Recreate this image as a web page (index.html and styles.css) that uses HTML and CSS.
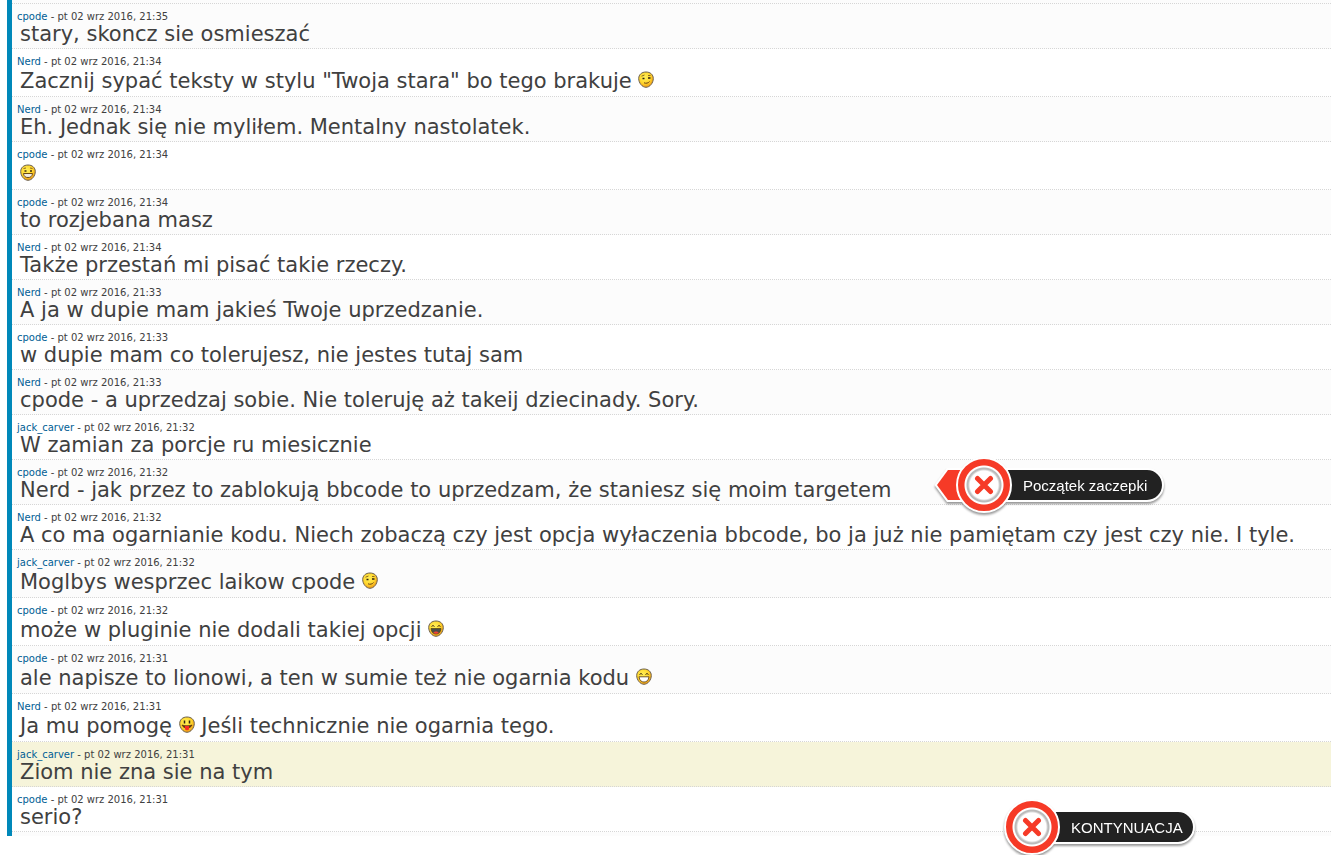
FILE: index.html
```html
<!DOCTYPE html>
<html lang="pl">
<head>
  <meta charset="utf-8">
  <title>Shoutbox</title>
  <link rel="stylesheet" href="styles.css">
</head>
<body>
<svg class="defs" width="0" height="0" aria-hidden="true">
  <defs>
    <radialGradient id="skin" cx="42%" cy="35%" r="65%">
      <stop offset="0" stop-color="#fff05a"/>
      <stop offset="0.6" stop-color="#ffd62c"/>
      <stop offset="1" stop-color="#f09a14"/>
    </radialGradient>
    <symbol id="face" viewBox="0 0 16 17">
      <path d="M8 1C12.300 1 15.300 3.700 15.300 7.500C15.300 12 11.800 16.300 8 16.300C4.200 16.300.7 12 .7 7.500C.7 3.700 3.700 1 8 1Z" fill="url(#skin)" stroke="#6b6050"/>
    </symbol>
    <symbol id="wink" viewBox="0 0 16 17">
      <use href="#face"/>
      <path d="M3.500 5.200L6.500 4M10 4.500H12.500" fill="none" stroke="#8a6820"/>
      <path d="M4.500 7.500H6.500M10 7H12.500" stroke="#2c2010" stroke-width="1.500"/>
      <path d="M6 11.800C8 12.800 10.500 12 11.500 10.500" fill="none" stroke="#6a4012"/>
    </symbol>
    <symbol id="grin" viewBox="0 0 16 17">
      <use href="#face"/>
      <path d="M3.500 4.500L6 4M10 4L12.500 4.500" stroke="#8a6820"/>
      <path d="M4.500 7H6.500M10 7H12" stroke="#3c2a10" stroke-width="1.500"/>
      <path d="M3.500 9.500H12.500C12 12.500 10.500 13.500 8 13.500C5.500 13.500 4 12.500 3.500 9.500Z" fill="#fff" stroke="#6a4812"/>
      <path d="M6 10V13M8 10V13M10 10V13" stroke="#c8b080" stroke-width=".5"/>
    </symbol>
    <symbol id="laugh" viewBox="0 0 16 17">
      <use href="#face"/>
      <path d="M3.500 6.500L5 5.500L6.500 6.500M9.500 6.500L11 5.500L12.500 6.500" fill="none" stroke="#4a3010"/>
      <path d="M3 8.500H13C12.500 12.500 10.500 14 8 14C5.500 14 3.500 12.500 3 8.500Z" fill="#4a4c48" stroke="#50400e" stroke-width=".7"/>
      <path d="M5.200 12.500C6.500 11 9.500 11 10.800 12.500C9.500 14.200 6.500 14.200 5.200 12.500Z" fill="#f04434"/>
    </symbol>
    <symbol id="cheese" viewBox="0 0 16 17">
      <use href="#face"/>
      <path d="M3.500 6.500L5 5.500L6.500 6.500M9.500 6.500L11 5.500L12.500 6.500" fill="none" stroke="#3c2a10"/>
      <path d="M3 8.800H13C12.500 12.500 10.500 14 8 14C5.500 14 3.500 12.500 3 8.800Z" fill="#fff" stroke="#50340e" stroke-width=".8"/>
    </symbol>
    <symbol id="tongue" viewBox="0 0 16 17">
      <use href="#face"/>
      <path d="M5.500 4.500V7.500M10.500 4.500V7.500" stroke="#2c2010" stroke-width="1.500"/>
      <path d="M3 9C5 10 11 10 13 9C12 11.500 10 12 8 12C6 12 4 11.500 3 9Z" fill="#7b2a10" stroke="#50340e" stroke-width=".7"/>
      <path d="M6 10H10V13C10 14.800 6 14.800 6 13Z" fill="#f52b24"/>
    </symbol>
    <symbol id="cross" viewBox="0 0 20 20">
      <path d="M3.500 3.500L16.500 16.500M16.500 3.500L3.500 16.500" stroke="#f63a27" stroke-width="5" stroke-linecap="round"/>
    </symbol>
  </defs>
</svg>

<div class="shoutbox">
  <div class="shout">
    <div class="meta"><a href="#">cpode</a> - pt 02 wrz 2016, 21:35</div>
    <div class="text">stary, skoncz sie osmieszać</div>
  </div>
  <div class="shout">
    <div class="meta"><a href="#">Nerd</a> - pt 02 wrz 2016, 21:34</div>
    <div class="text smiled">Zacznij sypać teksty w stylu "Twoja stara" bo tego brakuje <svg class="smiley"><use href="#wink"/></svg></div>
  </div>
  <div class="shout">
    <div class="meta"><a href="#">Nerd</a> - pt 02 wrz 2016, 21:34</div>
    <div class="text">Eh. Jednak się nie myliłem. Mentalny nastolatek.</div>
  </div>
  <div class="shout">
    <div class="meta"><a href="#">cpode</a> - pt 02 wrz 2016, 21:34</div>
    <div class="text smiled"><svg class="smiley"><use href="#grin"/></svg></div>
  </div>
  <div class="shout">
    <div class="meta"><a href="#">cpode</a> - pt 02 wrz 2016, 21:34</div>
    <div class="text">to rozjebana masz</div>
  </div>
  <div class="shout">
    <div class="meta"><a href="#">Nerd</a> - pt 02 wrz 2016, 21:34</div>
    <div class="text">Także przestań mi pisać takie rzeczy.</div>
  </div>
  <div class="shout">
    <div class="meta"><a href="#">Nerd</a> - pt 02 wrz 2016, 21:33</div>
    <div class="text">A ja w dupie mam jakieś Twoje uprzedzanie.</div>
  </div>
  <div class="shout">
    <div class="meta"><a href="#">cpode</a> - pt 02 wrz 2016, 21:33</div>
    <div class="text">w dupie mam co tolerujesz, nie jestes tutaj sam</div>
  </div>
  <div class="shout">
    <div class="meta"><a href="#">Nerd</a> - pt 02 wrz 2016, 21:33</div>
    <div class="text">cpode - a uprzedzaj sobie. Nie toleruję aż takeij dziecinady. Sory.</div>
  </div>
  <div class="shout">
    <div class="meta"><a href="#">jack_carver</a> - pt 02 wrz 2016, 21:32</div>
    <div class="text">W zamian za porcje ru miesicznie</div>
  </div>
  <div class="shout">
    <div class="meta"><a href="#">cpode</a> - pt 02 wrz 2016, 21:32</div>
    <div class="text">Nerd - jak przez to zablokują bbcode to uprzedzam, że staniesz się moim targetem</div>
  </div>
  <div class="shout">
    <div class="meta"><a href="#">Nerd</a> - pt 02 wrz 2016, 21:32</div>
    <div class="text">A co ma ogarnianie kodu. Niech zobaczą czy jest opcja wyłaczenia bbcode, bo ja już nie pamiętam czy jest czy nie. I tyle.</div>
  </div>
  <div class="shout">
    <div class="meta"><a href="#">jack_carver</a> - pt 02 wrz 2016, 21:32</div>
    <div class="text smiled">Moglbys wesprzec laikow cpode <svg class="smiley"><use href="#wink"/></svg></div>
  </div>
  <div class="shout">
    <div class="meta"><a href="#">cpode</a> - pt 02 wrz 2016, 21:32</div>
    <div class="text smiled">może w pluginie nie dodali takiej opcji <svg class="smiley"><use href="#laugh"/></svg></div>
  </div>
  <div class="shout">
    <div class="meta"><a href="#">cpode</a> - pt 02 wrz 2016, 21:31</div>
    <div class="text smiled">ale napisze to lionowi, a ten w sumie też nie ogarnia kodu <svg class="smiley"><use href="#cheese"/></svg></div>
  </div>
  <div class="shout">
    <div class="meta"><a href="#">Nerd</a> - pt 02 wrz 2016, 21:31</div>
    <div class="text smiled">Ja mu pomogę <svg class="smiley"><use href="#tongue"/></svg> Jeśli technicznie nie ogarnia tego.</div>
  </div>
  <div class="shout active">
    <div class="meta"><a href="#">jack_carver</a> - pt 02 wrz 2016, 21:31</div>
    <div class="text">Ziom nie zna sie na tym</div>
  </div>
  <div class="shout">
    <div class="meta"><a href="#">cpode</a> - pt 02 wrz 2016, 21:31</div>
    <div class="text">serio?</div>
  </div>
</div>

<div class="note note-start">
  <svg class="arrow" viewBox="0 0 40 36"><path d="M14 3H40V33H14L3 18Z" fill="#f63a27" stroke="#fff" stroke-width="4" paint-order="stroke"/></svg>
  <span class="badge"><svg class="cross"><use href="#cross"/></svg></span>
  <span class="label">Początek zaczepki</span>
</div>
<div class="note note-next">
  <span class="badge"><svg class="cross"><use href="#cross"/></svg></span>
  <span class="label">KONTYNUACJA</span>
</div>
</body>
</html>
```

FILE: styles.css
```css
* {
  box-sizing: border-box;
}

body {
  margin: 0;
  height: 100vh;
  position: relative;
  overflow: hidden;
  background: #fff;
  font-family: Verdana, "DejaVu Sans", sans-serif;
  color: #404040;
}

.defs {
  position: absolute;
}

.shoutbox {
  margin-left: 7px;
  padding: 3px 0 4px;
  border-left: 5px solid #0088b9;
  background: #fcfcfc;
}

.shout {
  padding: 7px 5px 3px;
  border-bottom: 1px dotted #d6d6d6;
}

.shout:first-child {
  border-top: 1px dotted #d6d6d6;
}

.shout:nth-child(even) {
  background: #fff;
}

.shout.active {
  background: #f6f4da;
}

.meta {
  margin-bottom: 1px;
  font-size: 10px;
  line-height: 12px;
}

.meta a {
  color: #005e95;
  text-decoration: none;
}

.text {
  padding-left: 3px;
  font-size: 21px;
  line-height: 21px;
}

.smiled {
  padding-top: 2px;
  padding-bottom: 1px;
}

.smiley {
  width: 16px;
  height: 17px;
  vertical-align: 0;
}

/* callouts over the list */
.note {
  position: absolute;
  display: flex;
  align-items: center;
  font-family: Helvetica, "Liberation Sans", sans-serif;
  filter: drop-shadow(0 2px 1px rgba(0, 0, 0, 0.4));
}

.note-start {
  left: 934px;
  top: 457px;
}

.note-next {
  left: 1004px;
  top: 799px;
}

.arrow {
  width: 40px;
  height: 36px;
  margin-right: -18px;
}

.badge {
  position: relative;
  z-index: 1;
  display: flex;
  align-items: center;
  justify-content: center;
  width: 56px;
  height: 56px;
  border: 2px solid #fff;
  border-radius: 50%;
  background: radial-gradient(circle, #fff 14px, #bbb 16px, #bbb 17px, #fff 18px, #fff 19px, #f63a27 20px);
}

.cross {
  width: 20px;
  height: 20px;
}

.label {
  margin-left: -16px;
  padding: 2px 10px 0 25px;
  border: 2px solid #fff;
  border-radius: 0 17px 17px 0;
  background: #222;
  color: #fff;
  font-size: 15px;
  line-height: 28px;
}

.note-start .label {
  padding-right: 15px;
}
```
